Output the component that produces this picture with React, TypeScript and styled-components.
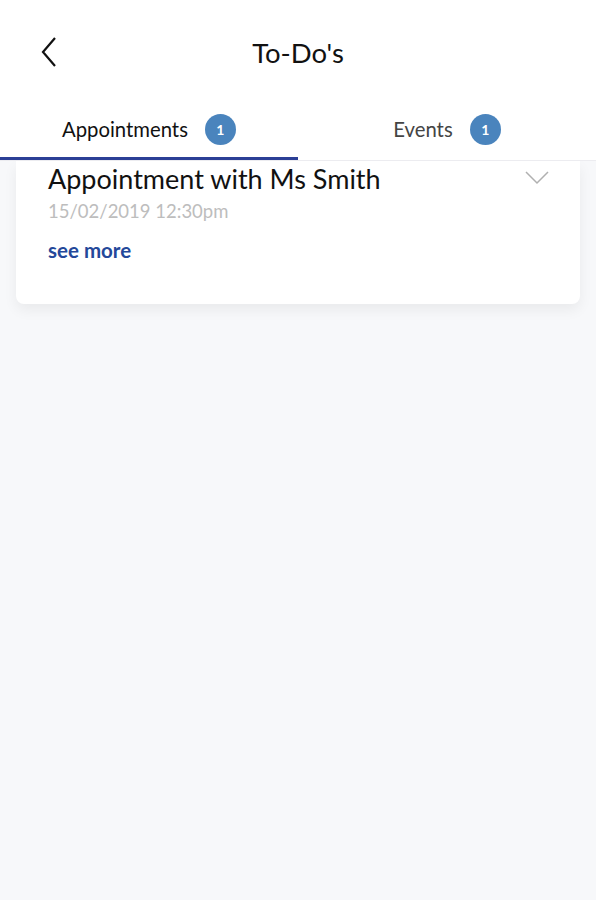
import React from "react";
import styled, { createGlobalStyle } from "styled-components";

const GlobalStyle = createGlobalStyle`
  html, body {
    margin: 0;
    padding: 0;
    background: #f7f8fa;
    font-family: "Lato", "Open Sans", sans-serif;
  }
`;

const Screen = styled.div`
  width: 596px;
  height: 900px;
  background: #f7f8fa;
  display: flex;
  flex-direction: column;
  overflow: hidden;
`;

const Header = styled.header`
  background: #fff;
  position: relative;
  z-index: 2;
`;

const TopBar = styled.div`
  height: 104px;
  display: grid;
  grid-template-columns: 80px 1fr 80px;
  align-items: center;
`;

const BackButton = styled.button`
  border: none;
  background: none;
  padding: 0 0 0 40px;
  height: 40px;
  display: flex;
  align-items: center;
  cursor: pointer;
`;

const Title = styled.h1`
  margin: 0;
  text-align: center;
  font-size: 27.5px;
  font-weight: 400;
  color: #111;
`;

const Tabs = styled.nav`
  display: flex;
  border-bottom: 1px solid #ececf0;
`;

const Tab = styled.div<{ $active?: boolean }>`
  flex: 1;
  height: 56px;
  padding-bottom: 6px;
  box-sizing: border-box;
  display: flex;
  align-items: center;
  justify-content: center;
  gap: 17px;
  font-size: 20.3px;
  color: ${(p) => (p.$active ? "#111" : "#444")};
  box-shadow: ${(p) => (p.$active ? "inset 0 -3px 0 #2b3f96" : "none")};
`;

const Badge = styled.span`
  width: 31px;
  height: 31px;
  border-radius: 50%;
  background: #4a84bd;
  color: #fff;
  font-size: 14px;
  font-weight: 700;
  display: flex;
  align-items: center;
  justify-content: center;
`;

const List = styled.main`
  padding: 0 16px;
`;

const Card = styled.article`
  background: #fff;
  border-radius: 0 0 8px 8px;
  box-shadow: 0 6px 14px rgba(0, 0, 0, 0.06);
  padding: 2px 31px 41px 32px;
  display: flex;
  justify-content: space-between;
  align-items: flex-start;
`;

const CardBody = styled.div`
  display: flex;
  flex-direction: column;
`;

const CardTitle = styled.h2`
  margin: 0;
  font-size: 27px;
  font-weight: 400;
  color: #111;
  line-height: 32px;
`;

const CardDate = styled.span`
  margin-top: 5px;
  font-size: 18.5px;
  line-height: 22px;
  color: #bdbdbd;
`;

const SeeMore = styled.a`
  margin-top: 15px;
  font-size: 20.5px;
  line-height: 26px;
  font-weight: 700;
  color: #24489a;
  text-decoration: none;
`;

const Chevron = styled.svg`
  margin-top: 8px;
`;

export default function App() {
  return (
    <Screen>
      <GlobalStyle />
      <Header>
        <TopBar>
          <BackButton aria-label="back">
            <svg width="18" height="32" viewBox="0 0 18 32">
              <path d="M15 2 L3 16 L15 30" fill="none" stroke="#111" strokeWidth="2.2" />
            </svg>
          </BackButton>
          <Title>To-Do's</Title>
          <span />
        </TopBar>
        <Tabs>
          <Tab $active>
            Appointments <Badge>1</Badge>
          </Tab>
          <Tab>
            Events <Badge>1</Badge>
          </Tab>
        </Tabs>
      </Header>
      <List>
        <Card>
          <CardBody>
            <CardTitle>Appointment with Ms Smith</CardTitle>
            <CardDate>15/02/2019 12:30pm</CardDate>
            <SeeMore href="#">see more</SeeMore>
          </CardBody>
          <Chevron width="24" height="14" viewBox="0 0 24 14">
            <path d="M1 1 L12 12 L23 1" fill="none" stroke="#b0b0b0" strokeWidth="1.5" />
          </Chevron>
        </Card>
      </List>
    </Screen>
  );
}
